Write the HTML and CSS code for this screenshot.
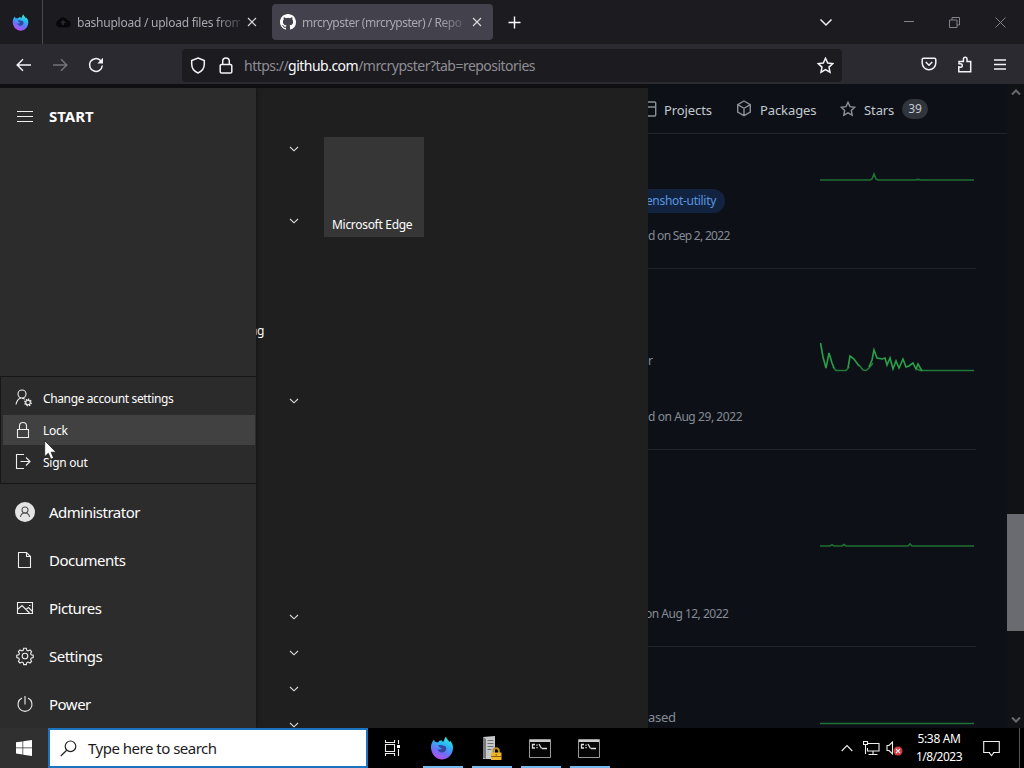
FILE: index.html
```html
<!DOCTYPE html>
<html lang="en">
<head>
<meta charset="utf-8">
<title>Desktop</title>
<link rel="stylesheet" href="styles.css">
</head>
<body>
<svg class="defs" width="0" height="0" aria-hidden="true">
  <defs>
    <linearGradient id="fox" x1="0.7" y1="0" x2="0.3" y2="1">
      <stop offset="0" stop-color="#3df0d0"/><stop offset=".35" stop-color="#28b5f5"/><stop offset=".65" stop-color="#6a72f5"/><stop offset="1" stop-color="#c04af0"/>
    </linearGradient>
    <symbol id="firefox" viewBox="0 0 24 24">
      <path fill="url(#fox)" d="M1 12C.7 8.500 2 6 4 3.500L5 6c1 0 2 0 3 .5C9 5 10 4.500 11.500 4.300L13 6c1-.5 1.200-3.500 3-5.500.5 2.500 2.500 3.500 3.500 5.500l.8-1.200C23 8 23.500 11 22.700 14.500 21.500 20 17 23.500 12 23.500S1.500 19 1 12z"/>
      <path fill="#30499c" d="M8 9.500c2-1 4.500-.3 5.300.2 1.700-.3 3 1 3 2.800 0 2.500-2 4-4.300 4S8 15.300 7.500 13C9 14 10.800 13.700 12 12c-1.500 0-2.500-.5-3-1.300z"/>
    </symbol>
    <symbol id="chev" viewBox="0 0 10 6"><path d="M1 1l4 3.800L9 1" fill="none" stroke="#ddd" stroke-width="1.100"/></symbol>
    <symbol id="cmd" viewBox="0 0 22 19">
      <path fill="#050505" stroke="#999" d="M.5.500h21v18H.5z"/><path fill="#ccc" d="M1 1h20v2H1z"/>
      <path fill="none" stroke="#ddd" stroke-width="1.300" d="M6 5.500H3.500v3.500H6M8 5.500v1.200m0 1.300v1.200M10 5l2.500 4.500M13 9.500h5"/>
    </symbol>
  </defs>
</svg>
<div class="screen">
  <header class="tabs">
    <div class="fx"><svg width="17" height="17"><use href="#firefox"/></svg></div>
    <div class="tab first">
      <svg width="16" height="14" viewBox="0 0 16 14"><path fill="#08080b" d="M4 12.500a4 4 0 0 1-.5-7.500A5 5 0 0 1 12.500 5a3.800 3.800 0 0 1 0 7.500z"/><path fill="#282730" d="M8 5l3 3H9v2H7V8H5z"/></svg>
      <span class="title t1">bashupload / upload files from</span>
      <svg class="x" width="10" height="10" viewBox="0 0 10 10"><path d="M1 1l8 8M9 1L1 9"/></svg>
    </div>
    <div class="tab active">
      <svg width="16" height="16" viewBox="0 0 16 16"><path fill="#fff" d="M8 0C3.580 0 0 3.580 0 8c0 3.540 2.290 6.530 5.470 7.590.4.070.55-.17.55-.38v-1.490c-2.010.37-2.530-.49-2.690-.94-.09-.23-.48-.94-.82-1.130-.28-.15-.68-.52-.01-.53.63-.01 1.080.58 1.230.82.72 1.210 1.870.87 2.330.66.07-.52.28-.87.51-1.070-1.780-.2-3.640-.89-3.640-3.950 0-.87.31-1.590.82-2.150-.08-.2-.36-1.020.08-2.120 0 0 .67-.21 2.200.82a7.400 7.400 0 0 1 4 0c1.530-1.040 2.200-.82 2.200-.82.44 1.100.16 1.920.08 2.120.51.56.82 1.270.82 2.150 0 3.070-1.870 3.750-3.650 3.950.29.25.54.73.54 1.480v2.200c0 .21.15.46.55.38A8 8 0 0 0 16 8c0-4.420-3.580-8-8-8z"/></svg>
      <span class="title t2">mrcrypster (mrcrypster) / Repo</span>
      <svg class="x" width="10" height="10" viewBox="0 0 10 10"><path d="M1 1l8 8M9 1L1 9"/></svg>
    </div>
    <svg class="plus" width="13" height="13" viewBox="0 0 13 13"><path d="M6.500.500v12M.5 6.500h12"/></svg>
    <div class="winctl">
      <svg width="14" height="9" viewBox="0 0 14 9"><path class="b" d="M1.500 1.500l5.500 5.500 5.500-5.500"/></svg>
      <svg class="min" width="10" height="10" viewBox="0 0 10 10"><path d="M0 4.500h10"/></svg>
      <svg width="11" height="11" viewBox="0 0 11 11"><path d="M.5 3h7.500v7.500H.5zM3 3V.5h7.500V8H8"/></svg>
      <svg width="11" height="11" viewBox="0 0 11 11"><path d="M.5.500l10 10M10.500.500l-10 10"/></svg>
    </div>
  </header>

  <nav class="bar">
    <div class="navbtns">
      <svg width="16" height="14" viewBox="0 0 16 14"><path d="M15 7H1.500M7 1.200L1.200 7 7 12.800"/></svg>
      <svg class="dim" width="16" height="14" viewBox="0 0 16 14"><path d="M1 7h13.500M9 1.200L14.800 7 9 12.800"/></svg>
      <svg width="16" height="16" viewBox="0 0 16 16"><path d="M14.300 8.500a6.400 6.400 0 1 1-2-5.200L14 5"/><path class="fill" d="M15 .8V6.500H9.300z"/></svg>
    </div>
    <div class="url">
      <svg width="16" height="17" viewBox="0 0 16 17"><path d="M8 1l6.300 2.500V7c0 4-2.300 7.300-6.300 9-4-1.700-6.300-5-6.300-9V3.500z"/></svg>
      <svg width="14" height="17" viewBox="0 0 14 17"><path d="M2.500 7.500h9a1.300 1.300 0 0 1 1.300 1.300v5.900a1.300 1.300 0 0 1-1.300 1.300h-9a1.300 1.300 0 0 1-1.300-1.300V8.800a1.300 1.300 0 0 1 1.300-1.300zM3.700 7.500V4.300a3.300 3.300 0 0 1 6.600 0v3.200"/></svg>
      <span class="addr">https://<b>github.com</b>/mrcrypster?tab=repositories</span>
      <svg class="star" width="17" height="17" viewBox="0 0 17 17"><path d="M8.500 1.300l2.200 4.700 5 .6-3.700 3.500 1 5.100-4.500-2.500L4 15.200l1-5.100L1.300 6.600l5-.6z"/></svg>
    </div>
    <div class="tools">
      <svg width="16" height="14" viewBox="0 0 16 14"><path d="M2.500 1.200h11a1.300 1.300 0 0 1 1.300 1.300V6a6.800 6.800 0 0 1-13.600 0V2.500a1.300 1.300 0 0 1 1.300-1.300zM4.800 5L8 8.200 11.200 5"/></svg>
      <svg width="16" height="17" viewBox="0 0 16 17"><path d="M1.800 10V15.700H13.700V5.500H10V3a1.800 1.800 0 0 0-3.600 0v2.500H2v2.200h1.500a1.700 1.700 0 0 1 0 3.500H1.800"/></svg>
      <svg width="12" height="11" viewBox="0 0 12 11"><path d="M0 1h12M0 5.500h12M0 10h12"/></svg>
    </div>
  </nav>

  <main class="content">
    <section class="start">
      <div class="rail">
        <div class="railhead">
          <svg width="16" height="11" viewBox="0 0 16 11"><path d="M0 .5h16M0 5.500h16M0 10.500h16"/></svg>
          <span class="st">START</span>
        </div>
        <div class="account">
          <div class="opt">
            <svg width="18" height="18" viewBox="0 0 18 18"><circle cx="7" cy="5" r="4"/><path d="M1 15.500c.5-3.500 2.500-5.700 5-6.500M7 9.200c1.200.1 2 .5 2.700 1"/><circle cx="13" cy="13.500" r="2.300"/><path stroke-dasharray="1.300 1.210" stroke-width="1.500" d="M13 10.300a3.200 3.200 0 1 1 0 6.400 3.200 3.200 0 1 1 0-6.400"/></svg>
            <span class="o1">Change account settings</span>
          </div>
          <div class="opt on">
            <svg width="18" height="18" viewBox="0 0 18 18"><path d="M2.500 8.500h11v8h-11zM4.500 8.500V5a3.500 3.500 0 0 1 7 0v3.500"/></svg>
            <span class="o2">Lock</span>
          </div>
          <div class="opt">
            <svg width="18" height="18" viewBox="0 0 18 18"><path d="M9 1.500H1.500v14H9M5.500 8.500h9.500M11 4.500l4 4-4 4"/></svg>
            <span class="o3">Sign out</span>
          </div>
        </div>
        <div class="item">
          <svg width="20" height="20" viewBox="0 0 20 20"><circle cx="10" cy="10" r="10" fill="#e4e4e4" stroke="none"/><g stroke="#555"><circle cx="10" cy="8" r="3"/><path d="M5.500 15c.3-2.500 2-4 4.500-4s4.200 1.500 4.500 4"/></g></svg>
          <span class="i1">Administrator</span>
        </div>
        <div class="item">
          <svg width="20" height="20" viewBox="0 0 20 20"><path d="M3.500 2.500h8l4 4v11h-12zM11.500 2.500v4h4"/></svg>
          <span class="i2">Documents</span>
        </div>
        <div class="item">
          <svg width="20" height="20" viewBox="0 0 20 20"><path d="M2.500 4.500h15v11h-15zM2.500 11.500l4.500-4 7.500 7.500M11 11.500l2.500-2 4 4"/><path d="M14 7.500h1.500"/></svg>
          <span class="i3">Pictures</span>
        </div>
        <div class="item">
          <svg width="20" height="20" viewBox="0 0 20 20"><circle cx="10" cy="10" r="2.800"/><path d="M8.700 2.300h2.600l.5 2 1.300.6 1.900-1 1.600 1.700-1 1.900.6 1.300 2 .5v2.300l-2 .5-.6 1.300 1 1.900-1.600 1.700-1.900-1-1.300.6-.5 2H8.700l-.5-2-1.300-.6-1.900 1-1.600-1.700 1-1.900-.6-1.300-2-.5V9.300l2-.5.6-1.300-1-1.900L5 3.900l1.900 1 1.300-.6z"/></svg>
          <span class="i4">Settings</span>
        </div>
        <div class="item">
          <svg width="20" height="20" viewBox="0 0 20 20"><path d="M10 2v8.500M7 4.100a7 7 0 1 0 6 0"/></svg>
          <span class="i5">Power</span>
        </div>
      </div>
      <div class="applist">
        <div class="row"><svg width="10" height="6"><use href="#chev"/></svg></div>
        <div class="row"></div>
        <div class="row"><svg width="10" height="6"><use href="#chev"/></svg></div>
        <div class="row"></div>
        <div class="row"></div>
        <div class="row"><span class="cut">ng</span></div>
        <div class="row"></div>
        <div class="row"><svg width="10" height="6"><use href="#chev"/></svg></div>
        <div class="row"></div><div class="row"></div><div class="row"></div><div class="row"></div><div class="row"></div>
        <div class="row"><svg width="10" height="6"><use href="#chev"/></svg></div>
        <div class="row"><svg width="10" height="6"><use href="#chev"/></svg></div>
        <div class="row"><svg width="10" height="6"><use href="#chev"/></svg></div>
        <div class="row"><svg width="10" height="6"><use href="#chev"/></svg></div>
      </div>
      <div class="tiles"><div class="tile"><span>Microsoft Edge</span></div></div>
    </section>

    <section class="page">
      <div class="ghnav">
        <svg class="proj" width="9" height="16" viewBox="0 0 9 16"><path d="M0 1h6.500a1.200 1.200 0 0 1 1.200 1.200v11.600A1.200 1.200 0 0 1 6.500 15H0M0 6h7.700"/></svg>
        <span class="g1">Projects</span>
        <svg class="pkg" width="16" height="17" viewBox="0 0 16 17"><path d="M8 1l6.300 3.600v7.400L8 15.700 1.700 12V4.600zM1.700 4.600L8 8.300l6.300-3.700M8 8.300v7.400"/></svg>
        <span class="g2">Packages</span>
        <svg class="gst" width="16" height="16" viewBox="0 0 16 16"><path d="M8 1.300l2 4.300 4.700.6-3.400 3.200.9 4.700L8 11.800l-4.200 2.300.9-4.700L1.300 6.200 6 5.600z"/></svg>
        <span class="g3">Stars</span>
        <span class="count">39</span>
      </div>
      <article class="repo r1">
        <div class="info"><span class="topic">enshot-utility</span><span class="date d1">d on Sep 2, 2022</span></div>
        <svg width="154" height="14" viewBox="0 0 154 14"><path stroke="#1f7034" d="M0 12h50l2-1 2-5 2 5 2 1h37l3-.6 3 .6h53"/></svg>
      </article>
      <article class="repo r2">
        <div class="info"><span class="desc">r</span><span class="date d2">d on Aug 29, 2022</span></div>
        <svg width="154" height="32" viewBox="0 0 154 32"><path stroke="#23793a" d="M13 26l3 3.500h10l3-3.500M39 24l4 5 3 .5 3-2.500 4-5M97 28l3 1.500h54"/><path stroke="#2aa048" d="M.5 2l2.500 14 3 11 3-15 3 10 2 5M28 27l2-12 4 3 5 7M49 26l3-7 2-10 3 8 5 1 3-1 2 7 3-7 3 11 3-8 3 7 4-9 3 8 3-1 4-3 3 6 2-5 4 7"/></svg>
      </article>
      <article class="repo r3">
        <div class="info"><span class="date d3">on Aug 12, 2022</span></div>
        <svg width="154" height="8" viewBox="0 0 154 8"><path stroke="#1f7034" d="M0 6h10l2-1.200 2 1.200h8l2-1.500 2 1.500h62l2-2 2 2h62"/></svg>
      </article>
      <article class="repo r4">
        <div class="info"><span class="desc">ased</span></div>
        <svg width="154" height="4" viewBox="0 0 154 4"><path stroke="#1f7034" d="M0 2.500h154"/></svg>
      </article>
    </section>

    <div class="scroll">
      <svg width="10" height="7" viewBox="0 0 10 7"><path d="M1 5.500l4-4 4 4"/></svg>
      <div class="thumb"></div>
      <svg width="10" height="7" viewBox="0 0 10 7"><path d="M1 1.500l4 4 4-4"/></svg>
    </div>
  </main>

  <footer class="taskbar">
    <div class="winbtn"><svg width="16" height="16" viewBox="0 0 16 16"><path fill="#fff" d="M0 2.300l6.500-.9v6.200H0zM7.200 1.300L16 0v7.600H7.200zM0 8.300h6.500v6.200L0 13.600zM7.200 8.300H16V16l-8.800-1.300z"/></svg></div>
    <div class="search">
      <svg width="17" height="17" viewBox="0 0 17 17"><circle cx="10.500" cy="6.300" r="5.300"/><path d="M6.700 10.200L.8 16"/></svg>
      <span>Type here to search</span>
    </div>
    <div class="tview"><svg width="17" height="16" viewBox="0 0 17 16"><path d="M1.500 0v2.500h9V0M1.500 16v-2.500h9V16M1.500 4.500h9v7h-9zM14.500 0v4M14.500 9v7"/><path d="M13 5h3v3h-3z" fill="#fff" stroke="none"/></svg></div>
    <div class="apps">
      <div class="app"><svg width="24" height="24"><use href="#firefox"/></svg></div>
      <div class="app"><svg width="22" height="25" viewBox="0 0 22 25"><path fill="#c6c8ca" d="M3 1l12-1v23H3z"/><path fill="#777a7c" d="M3 1l3 2v20l-3-1z"/><path stroke="#707375" fill="none" d="M7.500 4.500h6M7.500 7.500h6M7.500 10.500h6M7.500 13.500h4"/><path stroke="#b98a18" stroke-width="2" fill="none" d="M13.500 17v-2a2.700 2.700 0 0 1 5.400 0v2"/><path fill="#edb62d" d="M11 16.500h10.500V24H11z"/><path stroke="#8c6310" fill="none" d="M11 20.500h10M16.200 18v3"/></svg></div>
      <div class="app"><svg width="22" height="19"><use href="#cmd"/></svg></div>
      <div class="app"><svg width="22" height="19"><use href="#cmd"/></svg></div>
    </div>
    <div class="tray">
      <svg class="up" width="12" height="8" viewBox="0 0 12 8"><path d="M.7 7L6 1.500 11.300 7"/></svg>
      <svg class="net" width="17" height="15" viewBox="0 0 17 15"><path d="M5 2.500h11v7.500H4.500V7M10 10v3M5.500 13.500h9M.5.500h4v3h-4zM2.500 3.500V13"/></svg>
      <svg class="vol" width="17" height="15" viewBox="0 0 17 15"><path d="M1 4.500h2l3.500-3.500v12L3 9.500H1z"/><circle cx="12" cy="10" r="4.500" fill="#d43a42" stroke="none"/><path d="M10 8l4 4M14 8l-4 4"/></svg>
      <div class="clock"><span class="time">5:38 AM</span><span class="day">1/8/2023</span></div>
      <svg class="note" width="17" height="17" viewBox="0 0 17 17"><path d="M.7 1.500h15.600v11H10.500v.5L8.500 15.500l-2-2.500v-.5H.7z"/></svg>
      <div class="peek"></div>
    </div>
  </footer>
  <svg class="cursor" width="13" height="20" viewBox="0 0 13 20"><path fill="#fff" stroke="#111" stroke-width=".7" d="M.7.700v16l3.600-3.500 2.600 6 2.700-1.200-2.500-5.800h5z"/></svg>
</div>
</body>
</html>
```

FILE: styles.css
```css
* { box-sizing: border-box; }
body {
  margin: 0;
  background: #000;
  font-family: "Noto Sans", "Open Sans", sans-serif;
  overflow: hidden;
}
svg { display: block; flex: none; }
span { white-space: nowrap; }
.defs { position: absolute; }
.screen {
  width: 1024px;
  height: 768px;
  display: grid;
  grid-template-rows: 44px 40px 644px 40px;
  position: relative;
  overflow: hidden;
}

/* tab strip */
.tabs { display: flex; align-items: center; background: #1c1b20; }
.fx { width: 43px; height: 44px; display: flex; align-items: center; padding-left: 12px; border-right: 1px solid #4a494f; }
.tab { display: flex; align-items: center; height: 36px; }
.tab.first { width: 225px; padding-left: 12px; margin-right: 4px; }
.tab.active { width: 221px; padding-left: 8px; background: #42414c; border-radius: 4px; }
.title {
  font-size: 12px;
  line-height: 18px;
  padding-top: 1px;
  color: #a9a8b0;
  -webkit-mask-image: linear-gradient(90deg, #000 85%, rgba(0,0,0,.25));
  mask-image: linear-gradient(90deg, #000 85%, rgba(0,0,0,.25));
}
.t1 { width: 163px; margin-left: 6px; margin-right: 7px; letter-spacing: -.25px; }
.t2 { width: 162px; margin-left: 6px; margin-right: 8px; letter-spacing: -.48px; }
.x path { stroke: #dcdce0; stroke-width: 1.1; }
.plus { margin-left: 15px; }
.plus path { stroke: #fff; stroke-width: 1.4; }
.winctl { margin-left: auto; padding-right: 18px; display: flex; align-items: center; gap: 35px; }
.winctl svg:first-child { margin-right: 36px; }
.winctl path { fill: none; stroke: #84838a; }
.winctl path.b { stroke: #f0f0f3; stroke-width: 1.5; }

/* address bar */
.bar { display: flex; align-items: center; background: #2b2a31; }
.bar path { fill: none; stroke: #f3f3f6; stroke-width: 1.5; }
.bar path.fill { fill: #f3f3f6; stroke: none; }
.navbtns { width: 182px; display: flex; align-items: center; gap: 20px; padding-left: 16px; padding-top: 2px; }
.bar .dim path { stroke: #74737a; }
.url { width: 660px; height: 33px; background: #1c1b20; border-radius: 4px; display: flex; align-items: center; padding: 0 8px; margin-top: 2px; }
.url svg + svg { margin-left: 13px; }
.addr { font-size: 14px; color: #8f8e95; margin-left: 11px; letter-spacing: -.52px; }
.addr b { font-weight: 400; color: #fbfbfe; }
.star { margin-left: auto; }
.tools { margin-left: auto; display: flex; align-items: center; gap: 20px; padding-right: 18px; }
.tools svg:nth-child(2) { margin-right: 1px; }

/* desktop content */
.content { display: grid; grid-template-columns: 648px 359px 17px; background: #0f0f11; overflow: hidden; }
.start { margin-top: 4px; height: 640px; display: grid; grid-template-columns: 256px 68px 324px; background: #1f1f1f; overflow: hidden; }
.rail { background: #2c2c2c; color: #fff; display: flex; flex-direction: column; box-shadow: 1px 0 4px rgba(0,0,0,.35); z-index: 1; }
.rail svg { fill: none; stroke: #eee; stroke-width: 1.1; }
.railhead { display: flex; align-items: center; height: 56px; padding-left: 17px; gap: 16px; font-size: 15px; font-weight: 700; }
.account { margin-top: 232px; height: 108px; margin-bottom: 4px; border: 1px solid #171717; border-right: 0; padding: 6px 1px 0 2px; background: #2b2b2b; font-size: 12px; letter-spacing: -.38px; }
.opt { height: 30px; margin-bottom: 2px; display: flex; align-items: center; padding-left: 12px; gap: 10px; }
.opt.on { background: #414141; }
.o2, .o3 { letter-spacing: -.25px; }
.item { height: 48px; display: flex; align-items: center; padding-left: 15px; gap: 14px; font-size: 15px; letter-spacing: -.5px; }
.applist { padding-top: 43px; height: 640px; overflow: hidden; color: #fff; }
.row { height: 36px; display: flex; align-items: center; padding-left: 33px; }
.cut { font-size: 12px; margin-left: -39px; margin-top: 3px; letter-spacing: -.5px; }
.tiles { padding-top: 49px; }
.tile { width: 100px; height: 100px; background: #363636; display: flex; align-items: flex-end; padding: 0 8px 4px; color: #fff; font-size: 12px; line-height: 17px; letter-spacing: -.3px; }

/* repository page */
.page { background: #0d1117; color: #c3c9d0; overflow: hidden; }
.ghnav { height: 50px; border-bottom: 1px solid #20242a; display: flex; align-items: center; font-size: 13px; }
.ghnav svg { fill: none; stroke: #8b9098; stroke-width: 1.4; }
.g1, .g2, .g3 { padding-top: 2px; letter-spacing: -.1px; }
.g1 { width: 48px; margin-left: 7px; }
.pkg { margin-left: 24px; }
.g2 { width: 56px; margin-left: 8px; }
.gst { margin-left: 24px; }
.g3 { width: 30px; margin-left: 8px; }
.count { width: 26px; height: 20px; margin-left: 8px; border-radius: 10px; background: #30343b; text-align: center; font-size: 12px; line-height: 20px; }
.repo { width: 328px; display: flex; justify-content: space-between; border-bottom: 1px solid #20242a; padding-right: 2px; }
.repo svg { fill: none; stroke-width: 1.6; }
.info { display: flex; flex-direction: column; align-items: flex-start; }
.date, .desc { font-size: 12px; line-height: 18px; color: #858b94; }
.r1 { height: 135px; }
.r1 .info { padding-top: 55px; }
.r1 svg { margin-top: 34px; }
.topic { width: 77px; height: 24px; overflow: hidden; display: flex; justify-content: flex-end; padding-right: 9px; border-radius: 0 12px 12px 0; background: #12233f; color: #5a96e0; font-size: 12px; line-height: 24px; letter-spacing: -.3px; }
.d1 { margin-top: 14px; letter-spacing: -.7px; }
.r2 { height: 181px; }
.r2 .info { padding-top: 83px; }
.r2 svg { margin-top: 72px; }
.d2 { margin-top: 38px; letter-spacing: -.43px; }
.r3 { height: 197px; }
.r3 .info { padding-top: 155px; }
.r3 svg { margin-top: 90px; }
.d3 { text-indent: -3px; letter-spacing: -.5px; }
.r4 { height: 81px; border-bottom: 0; }
.r4 .info { padding-top: 61px; }
.r4 svg { margin-top: 74px; }
.r4 .desc { font-size: 13px; letter-spacing: -.3px; }
.scroll { background: #111214; display: flex; flex-direction: column; align-items: center; padding: 5px 0; }
.scroll path { fill: none; stroke: #67686c; stroke-width: 2; }
.thumb { width: 17px; height: 117px; background: #6a6b70; margin-top: 418px; margin-bottom: auto; }

/* taskbar */
.taskbar { display: flex; background: #000; color: #fff; }
.winbtn { width: 48px; background: #303030; display: flex; align-items: center; justify-content: center; }
.search { width: 320px; background: #fff; border: 2px solid #1b74bd; display: flex; align-items: center; padding-left: 10px; gap: 11px; color: #1b1b1b; font-size: 15px; letter-spacing: -.5px; }
.search svg { fill: none; stroke: #222; stroke-width: 1.2; }
.tview { width: 50px; padding-right: 2px; display: flex; align-items: center; justify-content: center; }
.tview svg { fill: none; stroke: #eee; stroke-width: 1.1; }
.apps { display: flex; }
.app { width: 49px; padding-right: 1px; display: flex; align-items: center; justify-content: center; background: linear-gradient(#76b9ed, #76b9ed) 5px bottom / 40px 2px no-repeat; }
.tray { margin-left: auto; display: flex; align-items: center; }
.tray > svg { fill: none; stroke: #eee; stroke-width: 1.1; }
.net { margin-left: 10px; }
.vol { margin-left: 6px; }
.clock { width: 60px; margin-left: 6px; display: flex; flex-direction: column; align-items: center; font-size: 12px; line-height: 18px; padding-bottom: 1px; letter-spacing: -.35px; }
.day { letter-spacing: -.5px; }
.note { margin-left: 14px; }
.peek { width: 1px; height: 40px; background: #555; margin-left: 19px; margin-right: 4px; }

.cursor { position: absolute; left: 44px; top: 440px; z-index: 2; }
```
